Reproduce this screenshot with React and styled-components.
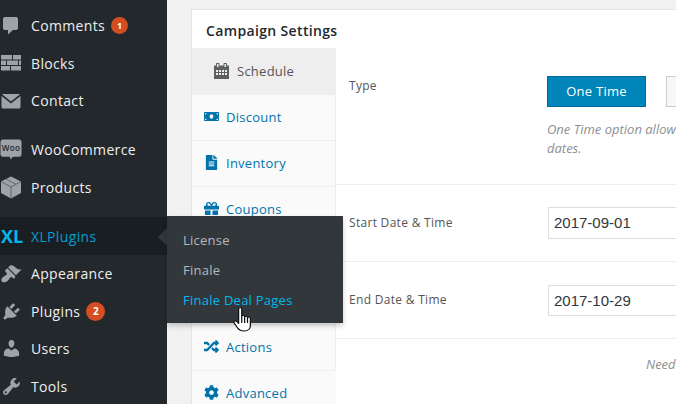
import styled, { createGlobalStyle } from "styled-components";
import { FaMoneyBill, FaFileAlt, FaGift, FaRandom, FaCog } from "react-icons/fa";

const Global = createGlobalStyle`
  html, body { margin: 0; padding: 0; background: #f1f1f1; }
  body { font-family: "Open Sans", sans-serif; overflow: hidden; }
  * { box-sizing: border-box; }
`;

const Page = styled.div`
  display: flex;
  width: 676px;
  height: 404px;
  overflow: hidden;
`;

const Sidebar = styled.nav`
  flex: none;
  width: 167px;
  height: 404px;
  padding-top: 6.8px;
  background: #23282d;
  display: flex;
  flex-direction: column;
`;

const MenuItem = styled.div`
  position: relative;
  flex: none;
  height: 37.5px;
  margin-top: ${({ $gap }) => ($gap ? "11.5px" : "0")};
  display: flex;
  align-items: center;
  gap: 9px;
  font-size: 14px;
  letter-spacing: 0.35px;
  color: ${({ $active }) => ($active ? "#00a0d2" : "#eee")};
  background: ${({ $active }) => ($active ? "#191e23" : "transparent")};
`;

const MenuIcon = styled.span`
  flex: none;
  width: 22px;
  height: 22px;
  display: flex;
  align-items: center;
  justify-content: center;
  color: #9ea3a8;
  svg { display: block; }
`;

const XlMark = styled.span`
  flex: none;
  width: 22px;
  padding-left: 1px;
  font-size: 18px;
  font-weight: 700;
  letter-spacing: 0;
  line-height: 22px;
  color: #00b9eb;
  white-space: nowrap;
`;

const Badge = styled.span`
  display: inline-flex;
  align-items: center;
  justify-content: center;
  width: ${({ $wide }) => ($wide ? "19px" : "17px")};
  height: ${({ $wide }) => ($wide ? "19px" : "17px")};
  margin-left: ${({ $wide }) => ($wide ? "-3px" : "-3px")};
  border-radius: 50%;
  background: #d54e21;
  color: #fff;
  font-size: ${({ $wide }) => ($wide ? "10px" : "9px")};
  font-weight: 700;
  letter-spacing: 0;
`;

const Arrow = styled.span`
  position: absolute;
  right: 0;
  top: 11px;
  border: 9px solid transparent;
  border-left: 0;
  border-right-color: #32373c;
`;

const Flyout = styled.div`
  position: absolute;
  z-index: 5;
  left: 167px;
  top: -1.3px;
  width: 176px;
  height: 107px;
  padding-top: 9px;
  background: #32373c;
  box-shadow: 0 3px 5px rgba(0, 0, 0, 0.2);
`;

const FlyoutLink = styled.div`
  height: 30px;
  padding-left: 16px;
  font-size: 13px;
  letter-spacing: 0.25px;
  line-height: 30px;
  color: ${({ $hover }) => ($hover ? "#00b9eb" : "#b4b9be")};
`;

const Cursor = styled.svg`
  position: absolute;
  left: 66px;
  top: 91px;
`;

const Main = styled.main`
  flex: 1;
  min-width: 0;
  padding: 9px 0 0 24px;
`;

const Panel = styled.section`
  width: 620px;
  border: 1px solid #e5e5e5;
  background: #fff;
`;

const PanelTitle = styled.h2`
  margin: 0;
  height: 38px;
  padding-left: 14px;
  font-size: 14px;
  font-weight: 600;
  letter-spacing: 0.35px;
  line-height: 41px;
  color: #23282d;
`;

const PanelBody = styled.div`
  display: flex;
`;

const Tabs = styled.ul`
  flex: none;
  width: 144px;
  margin: 0;
  padding: 0;
  list-style: none;
  background: #fafafa;
`;

const Tab = styled.li`
  height: ${({ $active }) => ($active ? "47px" : "46px")};
  display: flex;
  align-items: center;
  gap: ${({ $active }) => ($active ? "8px" : "7px")};
  padding-left: ${({ $active }) => ($active ? "22px" : "12px")};
  padding-bottom: ${({ $active }) => ($active ? "0" : "2px")};
  font-size: 13px;
  letter-spacing: 0.25px;
  color: ${({ $active }) => ($active ? "#555" : "#0073aa")};
  background: ${({ $active }) => ($active ? "#eee" : "transparent")};
  border-bottom: 1px solid #eee;
  border-right: 1px solid #eee;
  svg { flex: none; width: 15px; height: 15px; }
  &:last-child { border-right-color: transparent; }
`;

const Fields = styled.div`
  flex: 1;
  min-width: 0;
`;

const Field = styled.div`
  height: ${({ $height }) => $height}px;
  padding: ${({ $top }) => $top}px 0 0 13px;
  display: flex;
  border-bottom: 1px solid #eee;
`;

const FieldLabel = styled.div`
  flex: none;
  width: 199px;
  padding-top: ${({ $offset }) => $offset}px;
  font-size: 12px;
  letter-spacing: 0.3px;
  line-height: 18px;
  color: #555;
`;

const ButtonRow = styled.div`
  display: flex;
  gap: 20px;
  margin-left: -1px;
`;

const TypeButton = styled.div`
  width: 99px;
  height: 31px;
  border: 1px solid ${({ $primary }) => ($primary ? "#006799" : "#ccc")};
  background: ${({ $primary }) => ($primary ? "#0085ba" : "#f7f7f7")};
  color: #fff;
  font-size: 13px;
  letter-spacing: 0.25px;
  line-height: 29px;
  text-align: center;
`;

const HelpText = styled.p`
  width: 380px;
  margin: 13px 0 0 -1px;
  font-size: 13px;
  font-style: italic;
  line-height: 19px;
  color: #8b8f94;
`;

const DateInput = styled.div`
  width: 200px;
  height: ${({ $height }) => $height}px;
  padding-left: 5px;
  border: 1px solid #ddd;
  font-family: "Liberation Sans", Arial, sans-serif;
  font-size: 15px;
  line-height: 29px;
  color: #32373c;
`;

const NeedText = styled.div`
  padding: 16px 0 0 310px;
  font-size: 13px;
  font-style: italic;
  color: #8b8f94;
  white-space: nowrap;
`;

const CommentIcon = () => (
  <svg width="20" height="20" viewBox="0 0 20 20" fill="currentColor">
    <path d="M4 1h11c1.100 0 2 .9 2 2v9c0 1.100-.9 2-2 2h-3l-5 4.500v-4.500H4c-1.100 0-2-.9-2-2V3c0-1.100.9-2 2-2z" />
  </svg>
);

const BricksIcon = () => (
  <svg width="22" height="16" viewBox="0 0 22 16" fill="currentColor">
    <path d="M1 0h11v4.500H1zM13 0h8v4.500h-8zM1 5.500h5v4.500H1zM7 5.500h11v4.500H7zM19 5.500h2v4.500h-2zM1 11h9v4.500H1zM11 11h10v4.500H11z" />
  </svg>
);

const MailIcon = () => (
  <svg width="20" height="16" viewBox="0 0 20 16" fill="currentColor">
    <path d="M1.500 1h17c.5 0 .5.2.2.5L10 8.500 1.300 1.500C1 1.200 1 1 1.500 1zM.5 3l9.500 7.500L19.500 3v11c0 .8-.6 1.500-1.500 1.500H2C1.100 15.500.5 14.800.5 14z" />
  </svg>
);

const WooIcon = () => (
  <svg width="23" height="23" viewBox="0 0 23 23">
    <path fill="currentColor" d="M3 1h17c1.400 0 2.500 1.100 2.500 2.500v13c0 1.400-1.100 2.500-2.500 2.500h-6.500l-2.500 3-.7-3H3c-1.400 0-2.500-1.100-2.500-2.500v-13C.5 2.100 1.600 1 3 1z" />
    <text x="11.500" y="13" textAnchor="middle" fontSize="8.500" fontWeight="600" fill="#23282d">Woo</text>
  </svg>
);

const BoxIcon = () => (
  <svg width="22" height="23" viewBox="0 0 22 23">
    <path fill="currentColor" d="M11 .5l10 5v11.500l-10 5.500L1 17V5.500z" />
    <path fill="none" stroke="#5b6065" strokeWidth="0.9" d="M1 5.500l10 5.500 10-5.500M11 11v11.500M6 3l10 5.300" />
  </svg>
);

const BrushIcon = () => (
  <svg width="22" height="22" viewBox="0 0 20 20" fill="currentColor">
    <path d="M14.480 11.060L7.410 3.990l1.500-1.500c.5-.56 2.300-.47 3.510.32 1.210.8 1.430 1.280 2.910 2.100 1.180.64 2.450 1.260 4.450.85zm-.71.71L6.700 4.700 4.930 6.470c-.39.39-.39 1.020 0 1.410l1.060 1.060c.39.39.39 1.030 0 1.420-.6.6-1.430 1.110-2.210 1.690-.35.26-.7.53-1.010.84C1.430 13.230.78 15.780 1.800 17.100c1.320 1.020 3.870.37 5.210-.97.31-.31.58-.66.84-1.010.58-.78 1.090-1.610 1.690-2.210.39-.39 1.030-.39 1.420 0l1.060 1.060c.39.39 1.020.39 1.410 0z" />
  </svg>
);

const PlugIcon = () => (
  <svg width="21" height="21" viewBox="0 0 20 20" fill="currentColor">
    <path d="M13.110 4.360L9.870 7.600 8 5.730l3.240-3.240c.35-.34 1.050-.2 1.560.32.52.51.66 1.210.31 1.550zm-8 1.770l.91-1.120 9.010 9.010-1.190.84c-.71.71-2.630 1.160-3.820 1.160H6.140L4.900 17.260c-.59.59-1.540.59-2.120 0-.59-.58-.59-1.530 0-2.120l1.240-1.240v-3.880c0-1.130.4-3.190 1.090-3.890zm7.260 3.970l3.240-3.240c.34-.35 1.040-.21 1.550.31.52.51.66 1.210.31 1.550l-3.240 3.250z" />
  </svg>
);

const UserIcon = () => (
  <svg width="21" height="21" viewBox="0 0 20 20" fill="currentColor">
    <path d="M10 9.250c-2.270 0-2.730-3.440-2.730-3.440C7 4.020 7.820 2 9.970 2c2.160 0 2.980 2.020 2.710 3.810 0 0-.41 3.440-2.680 3.440zm0 2.570L12.720 10c2.390 0 4.520 2.330 4.520 4.530v2.490s-3.650 1.130-7.240 1.130c-3.650 0-7.240-1.130-7.240-1.130v-2.490c0-2.250 1.940-4.480 4.470-4.480z" />
  </svg>
);

const WrenchIcon = () => (
  <svg width="21" height="21" viewBox="0 0 20 20" fill="currentColor">
    <path d="M16.680 9.770c-1.340 1.340-3.300 1.670-4.950.99l-5.410 6.520c-.99.99-2.590.99-3.580 0s-.99-2.590 0-3.570l6.520-5.420c-.68-1.650-.35-3.610.99-4.950 1.280-1.280 3.120-1.620 4.720-1.060l-2.890 2.890 2.820 2.820 2.860-2.870c.53 1.580.18 3.390-1.080 4.650zM3.810 16.210c.4.39 1.040.39 1.430 0 .4-.4.4-1.040 0-1.430-.39-.4-1.030-.4-1.430 0-.39.39-.39 1.030 0 1.430z" />
  </svg>
);

const CalendarIcon = () => (
  <svg viewBox="0 0 15 16" style={{ height: 16 }}>
    <path fill="#5f5f5f" fillRule="evenodd" d="M0 2.500h2V1c0-.6.4-1 1-1h1.500c.6 0 1 .4 1 1v1.500h4V1c0-.6.4-1 1-1H12c.6 0 1 .4 1 1v1.500h2V16H0zM3 1v3h1.500V1zM10.500 1v3H12V1zM2 7v2h2V7zM5 7v2h2V7zM8 7v2h2V7zM11 7v2h2V7zM2 10v2h2v-2zM5 10v2h2v-2zM8 10v2h2v-2zM11 10v2h2v-2z" />
  </svg>
);

const HandCursor = () => (
  <Cursor width="20" height="26" viewBox="0 0 16 26" preserveAspectRatio="none">
    <path
      fill="#fff"
      stroke="#111"
      strokeWidth="1"
      strokeLinejoin="round"
      d="M4.500 2c0-1.800 2.500-1.800 2.500 0v7.500c0-1.500 2.300-1.500 2.300 0v.7c0-1.400 2.300-1.400 2.300 0v.8c0-1.300 2.300-1.300 2.300.1v7.400c0 2.500-1.300 5.500-5 5.500-3 0-4.200-1.300-5.200-3L1 16c-.9-1.700 1-2.700 2.200-1.300l1.300 1.700z"
    />
    <path stroke="#111" strokeWidth="1" d="M7 10v6M9.300 10.500v5.500M11.600 11v5" />
  </Cursor>
);

const menuTop = [
  { label: "Comments", icon: <CommentIcon />, badge: "1" },
  { label: "Blocks", icon: <BricksIcon /> },
  { label: "Contact", icon: <MailIcon /> },
  { label: "WooCommerce", icon: <WooIcon />, gap: true },
  { label: "Products", icon: <BoxIcon /> },
];

const menuBottom = [
  { label: "Appearance", icon: <BrushIcon /> },
  { label: "Plugins", icon: <PlugIcon />, badge: "2", wide: true },
  { label: "Users", icon: <UserIcon /> },
  { label: "Tools", icon: <WrenchIcon /> },
];

const renderItem = (item) => (
  <MenuItem key={item.label} $gap={item.gap}>
    <MenuIcon>{item.icon}</MenuIcon>
    {item.label}
    {item.badge && <Badge $wide={item.wide}>{item.badge}</Badge>}
  </MenuItem>
);

const tabs = [
  { label: "Schedule", icon: <CalendarIcon />, active: true },
  { label: "Discount", icon: <FaMoneyBill /> },
  { label: "Inventory", icon: <FaFileAlt /> },
  { label: "Coupons", icon: <FaGift /> },
  { label: "" },
  { label: "" },
  { label: "Actions", icon: <FaRandom /> },
  { label: "Advanced", icon: <FaCog /> },
];

export default function App() {
  return (
    <Page>
      <Global />
      <Sidebar>
        {menuTop.map(renderItem)}
        <MenuItem $gap $active>
          <XlMark>XL</XlMark>
          XLPlugins
          <Arrow />
          <Flyout>
            <FlyoutLink>License</FlyoutLink>
            <FlyoutLink>Finale</FlyoutLink>
            <FlyoutLink $hover>Finale Deal Pages</FlyoutLink>
            <HandCursor />
          </Flyout>
        </MenuItem>
        {menuBottom.map(renderItem)}
      </Sidebar>
      <Main>
        <Panel>
          <PanelTitle>Campaign Settings</PanelTitle>
          <PanelBody>
            <Tabs>
              {tabs.map((tab, i) => (
                <Tab key={i} $active={tab.active}>
                  {tab.icon}
                  {tab.label}
                </Tab>
              ))}
            </Tabs>
            <Fields>
              <Field $height={137} $top={28}>
                <FieldLabel $offset={1}>Type</FieldLabel>
                <div>
                  <ButtonRow>
                    <TypeButton $primary>One Time</TypeButton>
                    <TypeButton />
                  </ButtonRow>
                  <HelpText>One Time option allows you to run a campaign between fixed dates.</HelpText>
                </div>
              </Field>
              <Field $height={77} $top={22}>
                <FieldLabel $offset={7}>Start Date &amp; Time</FieldLabel>
                <DateInput $height={32}>2017-09-01</DateInput>
              </Field>
              <Field $height={77} $top={23}>
                <FieldLabel $offset={6}>End Date &amp; Time</FieldLabel>
                <DateInput $height={31}>2017-10-29</DateInput>
              </Field>
              <NeedText>Need</NeedText>
            </Fields>
          </PanelBody>
        </Panel>
      </Main>
    </Page>
  );
}
